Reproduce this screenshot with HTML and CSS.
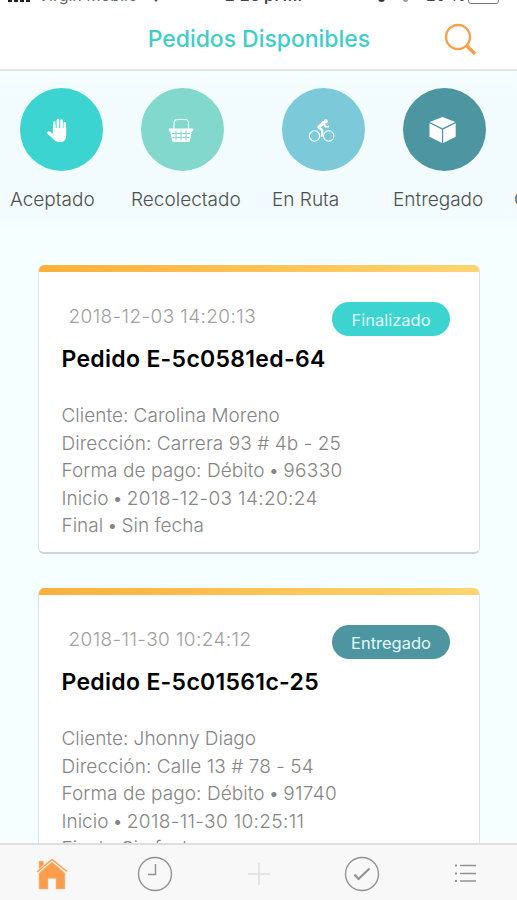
FILE: index.html
```
<!DOCTYPE html>
<html lang="es">

<head>
  <meta charset="utf-8">
  <title>Pedidos Disponibles</title>
  <link rel="stylesheet" href="styles.css">
</head>

<body>
  <div class="app">
    <div class="status-bar">
      <div class="carrier">
        <span class="signal"><i></i><i></i><i></i><i></i></span>
        <span>Virgin Mobile</span>
        <svg class="wifi" width="14" height="12" viewBox="0 0 14 12"><path d="M0 4Q7-3 14 4L7 12Z" /></svg>
      </div>
      <div class="clock">2:26 p. m.</div>
      <div class="battery">
        <span class="dot"></span>
        <span class="dot small"></span>
        <span>20 %</span>
        <span class="battery-box"></span>
      </div>
    </div>

    <div class="header">
      <h1 class="header-title">Pedidos Disponibles</h1>
      <svg class="search" width="34" height="34" viewBox="0 0 34 34">
        <circle cx="14" cy="14" r="12" />
        <path d="M22.5 22.5L31 31" />
      </svg>
    </div>

    <div class="filters">
      <div class="filter">
        <div class="circle accepted">
          <svg width="24" height="26" viewBox="0 0 24 26">
            <path class="finger" d="M8.3 15V5.5M11.9 13V3M15.5 13V3.6M18.8 14V6.3" />
            <path d="M6.8 11H20.2V18.5Q20.2 25 15 25H12.5Q9.5 25 7.5 22.2L1.200 16.600Q.5 14.500 2.500 14.300Q4.200 14.200 6.800 17Z" />
          </svg>
        </div>
        <div class="filter-name">Aceptado</div>
      </div>
      <div class="filter">
        <div class="circle collected">
          <svg width="26" height="26" viewBox="0 0 26 26">
            <path class="line" d="M6 12V6Q6 2.500 9.500 2.500H17Q20.500 2.500 20.500 6V12" />
            <path d="M.8 11.500H25.200V14.300H23.800L22 23.500Q21.700 25 20.200 25H5.800Q4.300 25 4 23.500L2.200 14.300H.8Z" />
            <path class="grid" d="M4 16.500H22M4.500 20.500H21.500M8 13.500V23.500M13 13.500V23.500M18 13.500V23.500" />
          </svg>
        </div>
        <div class="filter-name">Recolectado</div>
      </div>
      <div class="filter">
        <div class="circle route">
          <svg width="28" height="26" viewBox="0 0 28 26">
            <circle class="line" cx="6.500" cy="19" r="5.200" />
            <circle class="line" cx="20.700" cy="19" r="5.200" />
            <circle cx="17.800" cy="4.300" r="2.100" />
            <path d="M14.500 4.300L10 8.800Q8.300 10.500 10.200 11.800L13 13.800V19.800H15.300V12.800L12.900 10.500L15.400 8L17 10.500H21V8.800H18L16.500 5.200Q15.700 3.700 14.500 4.300Z" />
          </svg>
        </div>
        <div class="filter-name">En Ruta</div>
      </div>
      <div class="filter">
        <div class="circle delivered">
          <svg width="28" height="28" viewBox="0 0 28 28">
            <path d="M13.500 1L26.300 6L13.500 12.200L.8 6ZM.5 7.300L13 13.400V27L.5 20.800ZM26.700 7.300L14.200 13.400V27L26.700 20.800Z" />
          </svg>
        </div>
        <div class="filter-name">Entregado</div>
      </div>
      <div class="filter">
        <div class="filter-name last">Cancelado</div>
      </div>
    </div>

    <div class="orders">
      <div class="order">
        <div class="order-top">
          <div class="order-date">2018-12-03 14:20:13</div>
          <div class="badge finished">Finalizado</div>
        </div>
        <h2 class="order-title">Pedido E-5c0581ed-64</h2>
        <div class="order-info">
          <div>Cliente: Carolina Moreno</div>
          <div class="wide">Dirección: Carrera 93 # 4b - 25</div>
          <div class="wide">Forma de pago: Débito<b> • </b><span>96330</span></div>
          <div>Inicio<b> • </b><span>2018-12-03 14:20:24</span></div>
          <div>Final<b> • </b>Sin fecha</div>
        </div>
      </div>
      <div class="order">
        <div class="order-top">
          <div class="order-date">2018-11-30 10:24:12</div>
          <div class="badge delivered">Entregado</div>
        </div>
        <h2 class="order-title">Pedido E-5c01561c-25</h2>
        <div class="order-info">
          <div>Cliente: Jhonny Diago</div>
          <div class="wide">Dirección: Calle 13 # 78 - 54</div>
          <div class="wide">Forma de pago: Débito<b> • </b><span>91740</span></div>
          <div>Inicio<b> • </b><span>2018-11-30 10:25:11</span></div>
          <div>Final<b> • </b>Sin fecha</div>
        </div>
      </div>
    </div>

    <div class="tabs">
      <div class="tab">
        <svg width="36" height="36" viewBox="0 0 36 36">
          <path class="home" d="M5 17L18 6L31 17V33H22V22.500H14V33H5ZM5 5H9.500V9L5 13Z" />
          <path class="roof" d="M3 16L18 3.500L33 15.500" />
        </svg>
      </div>
      <div class="tab">
        <svg width="36" height="36" viewBox="0 0 36 36">
          <circle cx="18" cy="18" r="16.500" />
          <path d="M18.500 8V18.500H11" />
        </svg>
      </div>
      <div class="tab">
        <svg width="36" height="36" viewBox="0 0 36 36">
          <path class="plus" d="M18 7V29M7 18H29" />
        </svg>
      </div>
      <div class="tab">
        <svg width="36" height="36" viewBox="0 0 36 36">
          <circle cx="18" cy="18" r="16.500" />
          <path class="check" d="M10.500 18.500L14.500 23L25.500 12.500" />
        </svg>
      </div>
      <div class="tab">
        <svg width="36" height="36" viewBox="0 0 36 36">
          <path d="M13 9.500H29M13 17.500H29M13 25H29" />
          <path class="bullets" d="M8 9.500H10M8 17.500H10M8 25H10" />
        </svg>
      </div>
    </div>
  </div>
</body>

</html>
```
FILE: styles.css
```
body {
  margin: 0;
  font-family: Inter, "Liberation Sans", sans-serif;
  background: #f5ffff;
}

h1,
h2 {
  margin: 0;
}

.app {
  display: flex;
  flex-direction: column;
  height: 900px;
  overflow: hidden;
}

.status-bar {
  display: flex;
  flex: none;
  justify-content: space-between;
  align-items: flex-end;
  box-sizing: border-box;
  height: 20px;
  margin-top: -15px;
  padding: 0 11px 0 8px;
  background: #fff;
  color: #444;
  font-size: 16px;
  line-height: 20px;
  white-space: nowrap;
}

.carrier,
.battery {
  display: flex;
  align-items: flex-end;
  gap: 8px;
  width: 150px;
}

.carrier {
  color: #666;
}

.signal {
  display: flex;
  gap: 2px;
  padding-bottom: 3px;
}

.signal i {
  width: 4px;
  height: 8px;
  background: #222;
}

.wifi {
  flex: none;
  margin: 0 0 3px 4px;
  fill: #555;
}

.clock {
  font-weight: 600;
}

.battery {
  justify-content: flex-end;
  width: 137px;
}

.dot {
  width: 7px;
  height: 8px;
  margin: 0 10px 3px 0;
  border-radius: 4px;
  background: #333;
}

.dot.small {
  width: 5px;
  background: #999;
}

.battery-box {
  width: 29px;
  height: 14px;
  margin: 0 7px 1px -6px;
  border: 1px solid #777;
  border-radius: 3px;
}

.header {
  display: flex;
  flex: none;
  align-items: center;
  justify-content: flex-end;
  box-sizing: border-box;
  height: 66px;
  padding-right: 39px;
  border-bottom: 2px solid #e2e6e8;
  background: #fff;
}

.header-title {
  margin: 4px 74px 0 0;
  color: #3fcdc8;
  font-size: 23px;
  font-weight: 500;
  line-height: 28px;
  letter-spacing: -0.05px;
  white-space: nowrap;
}

.search {
  margin-top: 5px;
  fill: none;
  stroke: #f7a04a;
  stroke-width: 2.4;
}

.search path {
  stroke-width: 3.5;
}

.filters {
  display: flex;
  flex: none;
  gap: 31px;
  box-sizing: border-box;
  height: 158px;
  padding: 17px 0 0 10px;
  overflow: hidden;
  background: linear-gradient(#f5ffff, #f2fbfd 20%, #f2fbfd 85%, #f5ffff);
}

.filter {
  flex: none;
  width: 90px;
}

.filter:nth-child(2) {
  width: 110px;
}

.circle {
  display: flex;
  align-items: center;
  justify-content: center;
  width: 83px;
  height: 83px;
  margin-left: 9.5px;
  border-radius: 50%;
}

.circle svg {
  margin-right: 2px;
  fill: #fff;
}

.circle.accepted svg {
  margin-right: 7px;
}

.circle .line,
.circle .finger,
.circle .grid {
  fill: none;
  stroke: #fff;
  stroke-width: 1.1;
}

.circle .finger {
  stroke-width: 2.6;
  stroke-linecap: round;
}

.circle .grid {
  stroke: #82d8cc;
  stroke-width: 1;
}

.accepted,
.finished {
  background: #3bd4d1;
}

.collected {
  background: #82d8cc;
}

.route {
  background: #7cc9d9;
}

.delivered {
  background: #4c95a1;
}

.filter-name {
  margin-top: 17px;
  color: #4a5052;
  font-size: 19px;
  font-weight: 300;
  line-height: 24px;
  white-space: nowrap;
}

.filter-name.last {
  margin-top: 100px;
}

.orders {
  flex: 1;
  min-height: 0;
  padding: 36px 37px 0 38px;
  overflow: hidden;
}

.order {
  box-sizing: border-box;
  height: 289px;
  margin-bottom: 34px;
  padding: 37px 29px 0 22.5px;
  overflow: hidden;
  border-radius: 6px;
  border: 1px solid #dce3e4;
  border-top: 0;
  border-bottom: 2px solid #cdd4d5;
  background: linear-gradient(to right, #fbb03b, #ffd470) top / 100% 7px no-repeat #fff;
}

.order-top {
  display: flex;
  justify-content: space-between;
}

.order-date {
  padding-left: 7px;
  color: #a0a0a0;
  font-size: 19px;
  font-weight: 300;
  line-height: 29px;
  letter-spacing: 0.4px;
}

.badge {
  width: 118px;
  height: 34px;
  border-radius: 17px;
  color: #e2fafa;
  font-size: 16.5px;
  line-height: 36px;
  text-align: center;
}

.order-title {
  margin-top: 9px;
  color: #000;
  font-size: 23px;
  font-weight: 600;
  line-height: 28px;
  letter-spacing: 0.3px;
}

.order-info {
  margin-top: 29px;
  color: #858585;
  font-size: 19px;
  font-weight: 300;
  line-height: 27.5px;
}

.order-info b {
  font-weight: 300;
  word-spacing: -1.5px;
}

.order-info span {
  letter-spacing: 0.35px;
}

.order-info .wide {
  letter-spacing: 0.07px;
}

.tabs {
  display: flex;
  flex: none;
  align-items: center;
  box-sizing: border-box;
  height: 57px;
  padding-top: 3px;
  border-top: 2px solid #dedede;
  background: #f8f8f8;
}

.tab {
  display: flex;
  flex: 1;
  justify-content: center;
}

.tab svg {
  fill: none;
  stroke: #929292;
  stroke-width: 1.4;
}

.tab .home {
  fill: #fb9d4b;
  stroke: #fbc79b;
  stroke-width: 0.5;
}

.tab .roof {
  stroke: #fb9d4b;
}

.tab .plus {
  stroke: #ddd;
}

.tab .check {
  stroke-width: 2.2;
}

.tab .bullets {
  stroke-width: 2;
}
```
